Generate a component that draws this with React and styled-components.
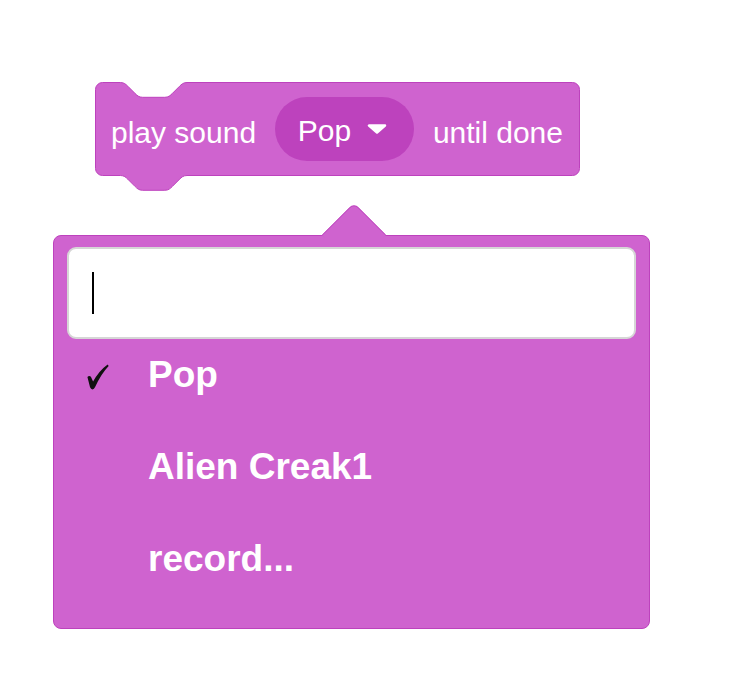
import React from "react";
import styled, { createGlobalStyle } from "styled-components";

const GlobalStyle = createGlobalStyle`
  body {
    margin: 0;
    background: #ffffff;
    font-family: "Liberation Sans", Arial, Helvetica, sans-serif;
  }
`;

const BLOCK_W = 485;
const BLOCK_H = 94;

// scratch notch, scaled
const s = 1.85;
const r = 7;
const notchStart = 25.4;
const notchW = 36 * s;

const n = (v) => +(v * s).toFixed(2);

const blockPath = [
  `M 0.5 ${r + 0.5}`,
  `A ${r} ${r} 0 0 1 ${r + 0.5} 0.5`,
  `H ${notchStart}`,
  `c ${n(2)} 0 ${n(3)} ${n(1)} ${n(4)} ${n(2)}`,
  `l ${n(4)} ${n(4)}`,
  `c ${n(1)} ${n(1)} ${n(2)} ${n(2)} ${n(4)} ${n(2)}`,
  `h ${n(12)}`,
  `c ${n(2)} 0 ${n(3)} ${-n(1)} ${n(4)} ${-n(2)}`,
  `l ${n(4)} ${-n(4)}`,
  `c ${n(1)} ${-n(1)} ${n(2)} ${-n(2)} ${n(4)} ${-n(2)}`,
  `H ${BLOCK_W - r - 0.5}`,
  `A ${r} ${r} 0 0 1 ${BLOCK_W - 0.5} ${r + 0.5}`,
  `V ${BLOCK_H - r - 0.5}`,
  `A ${r} ${r} 0 0 1 ${BLOCK_W - r - 0.5} ${BLOCK_H - 0.5}`,
  `H ${notchStart + notchW}`,
  `c ${-n(2)} 0 ${-n(3)} ${n(1)} ${-n(4)} ${n(2)}`,
  `l ${-n(4)} ${n(4)}`,
  `c ${-n(1)} ${n(1)} ${-n(2)} ${n(2)} ${-n(4)} ${n(2)}`,
  `h ${-n(12)}`,
  `c ${-n(2)} 0 ${-n(3)} ${-n(1)} ${-n(4)} ${-n(2)}`,
  `l ${-n(4)} ${-n(4)}`,
  `c ${-n(1)} ${-n(1)} ${-n(2)} ${-n(2)} ${-n(4)} ${-n(2)}`,
  `H ${r + 0.5}`,
  `A ${r} ${r} 0 0 1 0.5 ${BLOCK_H - r - 0.5}`,
  "Z",
].join(" ");

const sounds = [
  { id: 1, name: "Pop", checked: true },
  { id: 2, name: "Alien Creak1" },
  { id: 3, name: "record..." },
];

export default function App() {
  return (
    <>
      <GlobalStyle />
      <Canvas>
        <Block>
          <BlockShape width={BLOCK_W} height={BLOCK_H}>
            <path d={blockPath} fill="#CF63CF" stroke="#BD42BD" strokeWidth="1" />
          </BlockShape>
          <Label>play sound</Label>
          <Dropdown>
            <DropdownText>Pop</DropdownText>
            <svg width="20" height="10" viewBox="0 0 20 10">
              <path
                d="M2 1.5 H18 L10 8.5 Z"
                fill="#fff"
                stroke="#fff"
                strokeWidth="2.5"
                strokeLinejoin="round"
              />
            </svg>
          </Dropdown>
          <Label>until done</Label>
        </Block>

        <Menu>
          <SearchBox>
            <Caret />
          </SearchBox>
          <Items>
            {sounds.map((item) => (
              <Item key={item.id}>
                <CheckSlot>
                  {item.checked && (
                    <svg width="22" height="26" viewBox="0 0 26 27" preserveAspectRatio="none">
                      <path
                        d="M0.5 13.5 Q2.6 11.4 4.6 13.2 L7.2 18.2 Q14 7 24.4 0.4 L25.6 2 Q16.4 10.4 9.6 24 Q8.4 26.4 6.4 26.4 Q4.6 26.4 3.6 24.2 Z"
                        fill="#111"
                      />
                    </svg>
                  )}
                </CheckSlot>
                <ItemText>{item.name}</ItemText>
              </Item>
            ))}
          </Items>
        </Menu>
      </Canvas>
    </>
  );
}

const Canvas = styled.div`
  display: flex;
  flex-direction: column;
  align-items: flex-start;
  padding-top: 82px;
`;

const Block = styled.div`
  position: relative;
  box-sizing: border-box;
  width: ${BLOCK_W}px;
  height: ${BLOCK_H}px;
  margin-left: 95px;
  padding: 2px 17px 0 16px;
  display: flex;
  align-items: center;
  justify-content: space-between;
`;

const BlockShape = styled.svg`
  position: absolute;
  left: 0;
  top: 0;
  overflow: visible;
  z-index: 0;
`;

const Label = styled.span`
  position: relative;
  z-index: 1;
  color: #fff;
  font-size: 30px;
  padding-top: 5px;
  white-space: nowrap;
`;

const Dropdown = styled.div`
  position: relative;
  z-index: 1;
  box-sizing: border-box;
  height: 64px;
  margin-top: -2px;
  padding: 0 27px 0 23px;
  border-radius: 32px;
  background: #bd42bd;
  display: flex;
  align-items: center;
  gap: 16px;
`;

const DropdownText = styled.span`
  color: #fff;
  font-size: 30px;
  padding-top: 4px;
`;

const Menu = styled.div`
  position: relative;
  box-sizing: border-box;
  width: 597px;
  height: 394px;
  margin: 59px 0 0 53px;
  padding: 11px 13px 0 13px;
  background: #cf63cf;
  border: 1px solid #bd42bd;
  border-radius: 8px;

  &::before {
    content: "";
    position: absolute;
    left: 277px;
    top: -24px;
    width: 46px;
    height: 46px;
    box-sizing: border-box;
    background: #cf63cf;
    border-top: 1px solid #bd42bd;
    border-left: 1px solid #bd42bd;
    border-top-left-radius: 7px;
    transform: rotate(45deg);
  }
`;

const SearchBox = styled.div`
  position: relative;
  z-index: 1;
  box-sizing: border-box;
  height: 92px;
  background: #fff;
  border: 2px solid #d6d6d6;
  border-radius: 9px;
  display: flex;
  align-items: center;
  padding-left: 23px;
`;

const Caret = styled.span`
  display: block;
  width: 2px;
  height: 42px;
  background: #000;
`;

const Items = styled.div`
  display: flex;
  flex-direction: column;
  gap: 46px;
  margin-top: 13px;
`;

const Item = styled.div`
  display: flex;
  align-items: center;
  height: 46px;
  padding-left: 18px;
`;

const CheckSlot = styled.div`
  width: 63px;
  flex: none;
  display: flex;
  align-items: center;
  padding: 4px 0 0 2px;
  box-sizing: border-box;
`;

const ItemText = styled.span`
  color: #fff;
  font-size: 37px;
  font-weight: 700;
  white-space: nowrap;
`;
